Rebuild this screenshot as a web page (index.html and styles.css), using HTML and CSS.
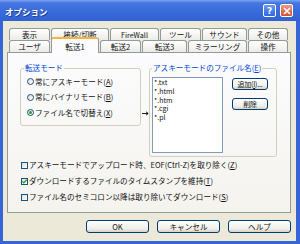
FILE: index.html
```html
<!DOCTYPE html>
<html lang="ja">
<head>
<meta charset="utf-8">
<link rel="stylesheet" href="styles.css">
</head>
<body>
<div class="window">
  <div class="titlebar">
    <span class="title">オプション</span>
    <div class="tb-buttons">
      <span class="tb-btn help">?</span>
      <span class="tb-btn close"><svg width="8" height="8" viewBox="0 0 8 8"><path d="M1 1L7 7M7 1L1 7" stroke="#fff" stroke-width="1.6" fill="none"/></svg></span>
    </div>
  </div>
  <div class="client">
    <div class="tabs">
      <div class="tabrow back">
        <div class="tab">表示</div>
        <div class="tab">接続/切断</div>
        <div class="tab">FireWall</div>
        <div class="tab">ツール</div>
        <div class="tab">サウンド</div>
        <div class="tab">その他</div>
      </div>
      <div class="tabrow front">
        <div class="tab">ユーザ</div>
        <div class="tab selected">転送1</div>
        <div class="tab">転送2</div>
        <div class="tab">転送3</div>
        <div class="tab">ミラーリング</div>
        <div class="tab">操作</div>
      </div>
    </div>
    <div class="panel">
      <div class="modes">
        <fieldset class="group mode-group">
          <legend>転送モード</legend>
          <div class="radios">
            <label class="opt"><span class="radio"></span>常にアスキーモード(<u>A</u>)</label>
            <label class="opt"><span class="radio"></span>常にバイナリモード(<u>B</u>)</label>
            <label class="opt"><span class="radio on"></span>ファイル名で切替え(<u>X</u>)</label>
          </div>
        </fieldset>
        <div class="arrow"><svg width="7" height="5" viewBox="0 0 7 5"><path d="M0 2.5H6M4 0.8L6.2 2.5L4 4.2" stroke="#000" stroke-width="0.9" fill="none"/></svg></div>
        <fieldset class="group ascii-group">
          <legend>アスキーモードのファイル名(<u>E</u>)</legend>
          <div class="ascii-body">
            <div class="listbox">
              <div>*.txt</div>
              <div>*.html</div>
              <div>*.htm</div>
              <div>*.cgi</div>
              <div>*.pl</div>
            </div>
            <div class="side-buttons">
              <div class="btn small">追加(<u>I</u>)...</div>
              <div class="btn small">削除</div>
            </div>
          </div>
        </fieldset>
      </div>
      <div class="checks">
        <label class="opt chk"><span class="checkbox"></span>アスキーモードでアップロード時、EOF(Ctrl-Z)を取り除く(<u>Z</u>)</label>
        <label class="opt chk"><span class="checkbox on"><svg width="7" height="7" viewBox="0 0 7 7"><path d="M1.3 3.4L2.8 4.9L5.7 1.8" stroke="#21a121" stroke-width="1.3" fill="none"/></svg></span>ダウンロードするファイルのタイムスタンプを維持(<u>T</u>)</label>
        <label class="opt chk"><span class="checkbox"></span>ファイル名のセミコロン以降は取り除いてダウンロード(<u>S</u>)</label>
      </div>
    </div>
    <div class="buttons">
      <div class="btn">OK</div>
      <div class="btn">キャンセル</div>
      <div class="btn">ヘルプ</div>
    </div>
  </div>
</div>
</body>
</html>
```

FILE: styles.css
```css
* { box-sizing: border-box; }
html, body { margin: 0; padding: 0; }
body {
  width: 300px;
  height: 244px;
  overflow: hidden;
  font-family: "Noto Sans CJK JP", sans-serif;
  font-size: 7.6px;
  line-height: 10px;
  color: #111;
  background: #2f62d6;
}
.window {
  width: 300px;
  height: 244px;
  display: flex;
  flex-direction: column;
  background: #3565d6;
}
.titlebar {
  height: 21px;
  flex: none;
  display: flex;
  align-items: center;
  padding-left: 5px;
  background: linear-gradient(#7aa4f2 0, #4677e0 3px, #3a6cdb 50%, #3062d2 100%);
  color: #fff;
}
.title {
  flex: 1;
  font-weight: bold;
  font-size: 8.5px;
  text-shadow: 1px 1px 0 #1d3f9a;
}
.tb-buttons { display: flex; gap: 4px; margin-right: 7px; }
.tb-btn {
  width: 13px;
  height: 13px;
  border: 1px solid #fff;
  border-radius: 2px;
  display: flex;
  align-items: center;
  justify-content: center;
}
.help {
  background: linear-gradient(#6c9bf2, #2f64e2);
  color: #fff;
  font-family: "DejaVu Sans", sans-serif;
  font-weight: bold;
  font-size: 9px;
}
.close { background: linear-gradient(#ec9a84, #d4502f); }
.client {
  flex: 1;
  margin: 0 4px 3px 3px;
  background: #ece9d8;
  padding: 7px 5px 0 4px;
}
.tabs { margin-left: 2px; }
.tabrow { display: flex; gap: 1px; height: 12px; }
.tab {
  height: 12px;
  border: 1px solid #919b9c;
  border-bottom: none;
  border-radius: 3px 3px 0 0;
  background: linear-gradient(#ffffff, #ecebe6);
  display: flex;
  align-items: center;
  justify-content: center;
  white-space: nowrap;
  line-height: 10px;
}
.back .tab:nth-child(1) { width: 41px; }
.back .tab:nth-child(2) { width: 58px; }
.back .tab:nth-child(3) { width: 49px; font-size: 7.2px; }
.back .tab:nth-child(4) { width: 41px; }
.back .tab:nth-child(5) { width: 45px; }
.back .tab:nth-child(6) { width: 40px; }
.front .tab:nth-child(1) { width: 41px; }
.front .tab:nth-child(2) { width: 48px; }
.front .tab:nth-child(3) { width: 41px; }
.front .tab:nth-child(4) { width: 45px; }
.front .tab:nth-child(5) { width: 59px; }
.front .tab:nth-child(6) { width: 40px; }
.tab.selected {
  position: relative;
  z-index: 1;
  margin-top: -3px;
  height: 16px;
  padding-top: 2px;
  background: #fcfcfe;
  border-top: 2px solid #f5b53e;
}
.panel {
  height: 161px;
  border: 1px solid #919b9c;
  background: linear-gradient(#fcfcfe, #f4f3ee);
  padding: 10px 0 0 12px;
}
.modes { display: flex; align-items: flex-start; }
.group {
  margin: 0;
  border: 1px solid #d0d0bf;
  border-radius: 3px;
  min-width: 0;
}
.group legend {
  color: #0046d5;
  line-height: 10px;
  height: 10px;
  padding: 0 1px;
  white-space: nowrap;
}
.mode-group {
  width: 121px;
  height: 63px;
  padding: 0 0 0 6px;
}
.mode-group legend { margin-left: -3px; }
.radios { margin-top: 1px; }
.opt { display: flex; align-items: center; white-space: nowrap; }
.radios .opt { height: 15.5px; }
.radio {
  width: 7px;
  height: 7px;
  border: 1px solid #1c5180;
  border-radius: 50%;
  background: linear-gradient(135deg, #dcdcd7, #ffffff);
  margin-right: 1px;
  display: flex;
  align-items: center;
  justify-content: center;
  flex: none;
}
.radio.on::after {
  content: "";
  width: 3px;
  height: 3px;
  border-radius: 50%;
  background: #21a121;
}
.arrow {
  width: 8px;
  margin-top: 48px;
  padding-left: 1px;
  display: flex;
}
.ascii-group {
  width: 128px;
  height: 94px;
  padding: 0 0 0 2px;
}
.ascii-body { display: flex; margin-top: 4px; }
.listbox {
  width: 71px;
  height: 76px;
  border: 1px solid #7f9db9;
  background: #fff;
  padding: 0 1px;
  font-size: 7px;
  line-height: 8.8px;
}
.side-buttons {
  display: flex;
  flex-direction: column;
  gap: 8px;
  margin: 1px 0 0 9px;
}
.btn {
  height: 13px;
  border: 1px solid #003c74;
  border-radius: 3px;
  background: linear-gradient(#ffffff, #f0efea 70%, #d8d3c8);
  display: flex;
  align-items: center;
  justify-content: center;
  white-space: nowrap;
}
.btn.small { width: 36px; height: 12px; font-size: 7px; letter-spacing: -0.2px; }
.checks { margin-left: 1px; }
.chk { height: 16px; }
.checkbox {
  width: 7px;
  height: 7px;
  border: 1px solid #1c5180;
  background: linear-gradient(135deg, #dcdcd7, #ffffff);
  margin-right: 1px;
  flex: none;
  display: flex;
}
.checkbox svg { margin: -1px; }
.buttons {
  display: flex;
  justify-content: flex-end;
  gap: 8px;
  margin-top: 7px;
}
.buttons .btn { width: 63px; }
u { text-decoration: underline; text-underline-offset: 1px; }
```
